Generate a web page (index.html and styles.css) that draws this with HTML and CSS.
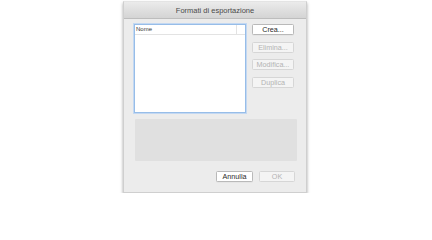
FILE: index.html
```html
<!DOCTYPE html>
<html lang="it">
<head>
<meta charset="utf-8">
<title>Formati di esportazione</title>
<link rel="stylesheet" href="styles.css">
</head>
<body>
<div class="window">
  <div class="titlebar">Formati di esportazione</div>
  <div class="content">
    <div class="top-row">
      <div class="list">
        <div class="list-header">
          <div class="col-name">Nome</div>
          <div class="col-rest"></div>
        </div>
      </div>
      <div class="side-buttons">
        <button class="btn">Crea...</button>
        <button class="btn disabled">Elimina...</button>
        <button class="btn disabled">Modifica...</button>
        <button class="btn disabled">Duplica</button>
      </div>
    </div>
    <div class="panel"></div>
    <div class="footer">
      <button class="btn btn-annulla">Annulla</button>
      <button class="btn btn-ok disabled">OK</button>
    </div>
  </div>
</div>
</body>
</html>
```
FILE: styles.css
```css
html, body {
  margin: 0;
  padding: 0;
  background: #ffffff;
}
body {
  font-family: "Liberation Sans", Arial, sans-serif;
  padding-top: 1px;
}
.window {
  width: 182px;
  margin-left: 123px;
  background: #ececec;
  border: 1px solid #cfcfcf;
  border-top-color: #e4e4e4;
  box-shadow: 0 2px 3px rgba(0, 0, 0, 0.35);
}
.titlebar {
  height: 16px;
  line-height: 18px;
  text-align: center;
  font-size: 7.5px;
  color: #4a4a4a;
  background: linear-gradient(#ebebeb, #d4d4d4);
  border-bottom: 1px solid #bdbdbd;
}
.content {
  padding: 5px 11px 10px 9px;
}
.top-row {
  display: flex;
  gap: 6px;
}
.list {
  width: 110px;
  height: 87px;
  background: #ffffff;
  border: 1px solid #97bde8;
  box-shadow: 0 0 0 1px #c3d8f2;
  margin-left: 1px;
}
.list-header {
  display: flex;
  height: 9px;
  border-bottom: 1px solid #e3e3e3;
  font-size: 6px;
  line-height: 9px;
  color: #333;
}
.col-name {
  width: 102px;
  padding-left: 1px;
  border-right: 1px solid #e3e3e3;
  box-sizing: border-box;
}
.side-buttons {
  display: flex;
  flex-direction: column;
  gap: 6.6px;
  padding-top: 0;
}
.btn {
  font-family: "Liberation Sans", Arial, sans-serif;
  font-size: 7.2px;
  height: 11px;
  width: 42px;
  padding: 0;
  margin: 0;
  line-height: 9px;
  background: #ffffff;
  border: 1px solid #b9b9b9;
  border-radius: 1.5px;
  color: #2a2a2a;
  box-shadow: 0 0.5px 0 rgba(0,0,0,0.06);
}
.btn.disabled {
  background: #f4f4f4;
  border-color: #d6d6d6;
  color: #b3b3b3;
  box-shadow: none;
}
.panel {
  margin-top: 6px;
  margin-left: 2px;
  width: 162px;
  height: 42px;
  background: #e0e0e0;
  border-radius: 1px;
}
.footer {
  display: flex;
  justify-content: flex-end;
  gap: 6px;
  margin-top: 10px;
}
.btn-annulla {
  width: 37px;
}
.btn-ok {
  width: 36px;
}
```
